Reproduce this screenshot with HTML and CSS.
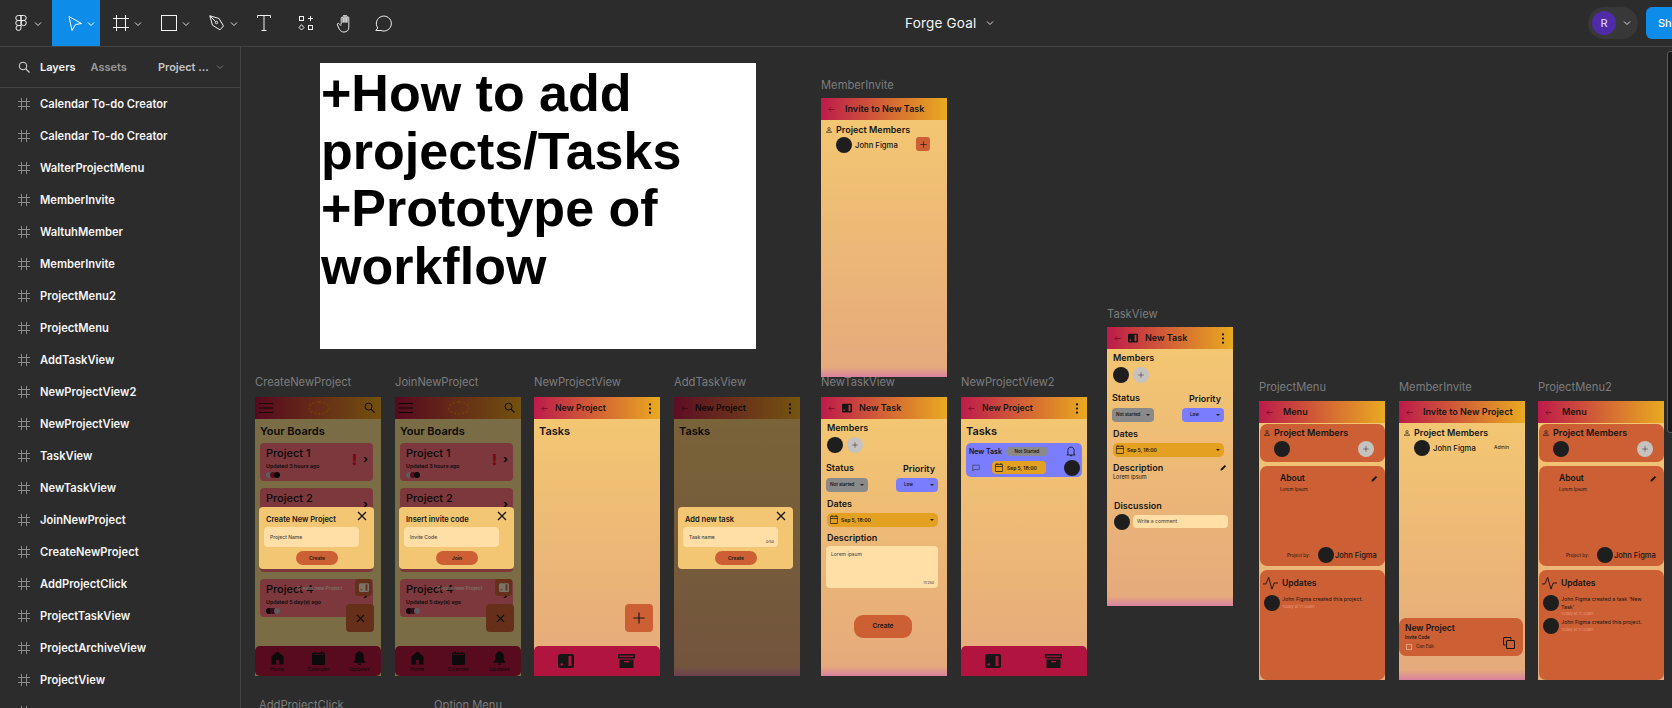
FILE: index.html
```html
<!DOCTYPE html>
<html lang="en">
<head>
<meta charset="utf-8">
<title>Forge Goal</title>
<link rel="stylesheet" href="styles.css">
</head>
<body>
<svg class="defs" width="0" height="0" aria-hidden="true">
  <symbol id="i-chev" viewBox="0 0 8 8"><path d="M1 2.5 4 5.5 7 2.5" fill="none" stroke="currentColor" stroke-width="1"/></symbol>
  <symbol id="i-hash" viewBox="0 0 12 12"><path d="M3.5 0v12M8.5 0v12M0 3.5h12M0 8.5h12" fill="none" stroke="currentColor" stroke-width="1"/></symbol>
  <symbol id="i-back" viewBox="0 0 8 8"><path d="M7.5 4H1M3.5 1.5 1 4l2.500 2.500" fill="none" stroke="currentColor" stroke-width="1"/></symbol>
  <symbol id="i-kebab" viewBox="0 0 4 12"><circle cx="2" cy="1.500" r="1.200"/><circle cx="2" cy="6" r="1.200"/><circle cx="2" cy="10.500" r="1.200"/></symbol>
  <symbol id="i-book" viewBox="0 0 16 14"><rect x="0" y="0" width="16" height="14" rx="2"/><rect x="10.500" y="2" width="3" height="10" fill="var(--cut,#b0143f)"/><rect x="2.500" y="9.500" width="2.500" height="2" fill="var(--cut,#b0143f)"/></symbol>
  <symbol id="i-archive" viewBox="0 0 17 14"><rect x="0" y="0" width="17" height="4.500" rx=".5"/><rect x="1.500" y="1.600" width="14" height="1.300" fill="var(--cut,#b0143f)"/><rect x="1.500" y="5.500" width="14" height="8.500"/><rect x="6" y="7" width="5" height="1.400" fill="var(--cut,#b0143f)"/></symbol>
  <symbol id="i-plus" viewBox="0 0 12 12"><path d="M6 .5v11M.5 6h11" fill="none" stroke="currentColor" stroke-width="1.100"/></symbol>
  <symbol id="i-close" viewBox="0 0 10 10"><path d="M1 1l8 8M9 1 1 9" fill="none" stroke="currentColor" stroke-width="1.300"/></symbol>
  <symbol id="i-search" viewBox="0 0 12 12"><circle cx="5" cy="5" r="3.800" fill="none" stroke="currentColor" stroke-width="1"/><path d="M7.800 7.800 11.500 11.500" stroke="currentColor" stroke-width="1.100"/></symbol>
  <symbol id="i-bell" viewBox="0 0 13 14"><path d="M6.500 0a1 1 0 0 1 1 1.100C9.600 1.600 10.700 3.300 10.700 5.300V9l1.800 2v.8H.5V11l1.800-2V5.300C2.300 3.300 3.400 1.600 5.500 1.100A1 1 0 0 1 6.500 0ZM4.800 12.500h3.400a1.700 1.500 0 0 1-3.400 0Z"/></symbol>
  <symbol id="i-bell-o" viewBox="0 0 13 14"><path d="M2.500 10.500V5.500C2.500 3 4 1.300 6.500 1.300S10.500 3 10.500 5.500v5l1.300 1H1.200ZM5 12.500h3" fill="none" stroke="currentColor" stroke-width="1.100"/></symbol>
  <symbol id="i-home" viewBox="0 0 14 14"><path d="M7 0 13.500 5.500V14H.5V5.500Z"/><rect x="5.500" y="9" width="3" height="5" fill="var(--cut,#5a0a22)"/></symbol>
  <symbol id="i-cal" viewBox="0 0 12 13"><path d="M2.500 0h1v1.500h5V0h1v1.500H11a1 1 0 0 1 1 1V12a1 1 0 0 1-1 1H1a1 1 0 0 1-1-1V2.500a1 1 0 0 1 1-1h1.500Z"/><rect x="1" y="3" width="10" height=".6" fill="var(--cut,#5a0a22)"/></symbol>
  <symbol id="i-cal-o" viewBox="0 0 12 13"><path d="M3 0v2.500M9 0v2.500M1 1.700h10a.5.5 0 0 1 .5.500V12a.5.5 0 0 1-.5.500H1a.5.5 0 0 1-.5-.5V2.200a.5.5 0 0 1 .5-.5ZM.5 5h11" fill="none" stroke="currentColor" stroke-width="1.100"/></symbol>
  <symbol id="i-person" viewBox="0 0 8 8"><circle cx="4" cy="2.300" r="1.600" fill="none" stroke="currentColor" stroke-width=".8"/><path d="M.8 7.500V6.500C.8 5.500 2 5 4 5s3.200.5 3.200 1.500v1Z" fill="none" stroke="currentColor" stroke-width=".8"/></symbol>
  <symbol id="i-pencil" viewBox="0 0 8 8"><path d="M.5 7.500 1 5.500 5.500 1 7 2.500 2.500 7Z"/></symbol>
  <symbol id="i-pulse" viewBox="0 0 16 14"><path d="M0 8h3L6 1l3.500 12.500L12 7h4" fill="none" stroke="currentColor" stroke-width="1"/></symbol>
  <symbol id="i-copy" viewBox="0 0 12 12"><rect x="3.500" y="3.500" width="8" height="8" rx="1" fill="none" stroke="currentColor" stroke-width="1.100"/><path d="M2.500 8H1.500a1 1 0 0 1-1-1V1.500a1 1 0 0 1 1-1H7a1 1 0 0 1 1 1v1" fill="none" stroke="currentColor" stroke-width="1.100"/></symbol>
  <symbol id="i-comment" viewBox="0 0 9 8"><path d="M.8 .8h7.400v5H2.300L.8 7.200Z" fill="none" stroke="currentColor" stroke-width=".7"/></symbol>
  <symbol id="i-menu" viewBox="0 0 14 10"><path d="M0 .5h14M0 5h14M0 9.500h14" stroke="currentColor" stroke-width="1"/></symbol>
</svg>

<header class="topbar">
  <div class="tool tool-figma">
    <svg class="ico-figma" viewBox="0 0 12 16"><path d="M6 .5H3.250a2.500 2.500 0 0 0 0 5H6ZM6 .5h2.750a2.500 2.500 0 0 1 0 5H6ZM6 5.500H3.250a2.500 2.500 0 0 0 0 5H6ZM6 8a2.500 2.500 0 1 0 5.250 0A2.500 2.500 0 1 0 6 8ZM6 10.500H3.250a2.500 2.500 0 1 0 2.750 2.500Z" fill="none" stroke="currentColor"/></svg>
    <svg class="chev"><use href="#i-chev"/></svg>
  </div>
  <div class="tool tool-active">
    <svg class="ico" viewBox="0 0 16 16"><path d="M2 1.500 14.500 8.500 8.500 9.500 5 15.500Z" fill="none" stroke="currentColor"/></svg>
    <svg class="chev"><use href="#i-chev"/></svg>
  </div>
  <div class="tool">
    <svg class="ico" viewBox="0 0 16 16"><path d="M3.500 0v16M12.500 0v16M0 3.500h16M0 12.500h16" fill="none" stroke="currentColor"/></svg>
    <svg class="chev"><use href="#i-chev"/></svg>
  </div>
  <div class="tool">
    <svg class="ico" viewBox="0 0 16 16"><rect x=".5" y=".5" width="15" height="15" fill="none" stroke="currentColor"/></svg>
    <svg class="chev"><use href="#i-chev"/></svg>
  </div>
  <div class="tool">
    <svg class="ico" viewBox="0 0 16 16"><path d="M.8.800 10 3.500l4.500 7.500-3.500 3.800-7.500-4.500ZM.8.800 6.500 6.500" fill="none" stroke="currentColor"/><circle cx="7.500" cy="7.500" r="1.200" fill="none" stroke="currentColor"/></svg>
    <svg class="chev"><use href="#i-chev"/></svg>
  </div>
  <div class="tool tool-plain tool-t">
    <svg class="ico" viewBox="0 0 16 16"><path d="M1.500 3V.5h13V3M8 .5v15M5.500 15.500h5" fill="none" stroke="currentColor"/></svg>
  </div>
  <div class="tool tool-plain">
    <svg class="ico" viewBox="0 0 16 16"><rect x="1.500" y="1.500" width="4" height="4" fill="none" stroke="currentColor"/><rect x="10.500" y="10.500" width="4" height="4" fill="none" stroke="currentColor"/><path d="M12.500 1v5M10 3.500h5M3.500 9.700 6 12.500 3.500 15 1 12.500Z" fill="none" stroke="currentColor"/></svg>
  </div>
  <div class="tool tool-plain tool-hand">
    <svg class="ico ico-big" viewBox="0 0 18 20"><path d="M5 11V4.500a1 1 0 0 1 2 0V9 2.500a1 1 0 0 1 2 0V9 2.500a1 1 0 0 1 2 0V9 4a1 1 0 0 1 2 0v10c0 3-2 5-5 5-2.500 0-3.500-1-5-3L1 11.500c-.6-1.200.8-2.200 1.800-1.300L5 12.500" fill="none" stroke="currentColor"/></svg>
  </div>
  <div class="tool tool-plain">
    <svg class="ico ico-big" viewBox="0 0 18 18"><path d="M2.800 13.500A7.500 7.500 0 1 1 6 16H.8Z" fill="none" stroke="currentColor"/></svg>
  </div>
  <div class="title">Forge Goal<svg class="chev"><use href="#i-chev"/></svg></div>
  <div class="right">
    <div class="pill"><span class="avatar">R</span><svg class="chev"><use href="#i-chev"/></svg></div>
    <div class="share">Share</div>
  </div>
</header>

<div class="main">
  <aside class="side">
    <div class="tabs">
      <svg class="tabs-search"><use href="#i-search"/></svg>
      <span class="tab tab-on">Layers</span>
      <span class="tab">Assets</span>
      <span class="tab-page">Project ...</span>
      <svg class="chev chev-dim"><use href="#i-chev"/></svg>
    </div>
    <ul class="layers">
      <li><svg><use href="#i-hash"/></svg>Calendar To-do Creator</li>
      <li><svg><use href="#i-hash"/></svg>Calendar To-do Creator</li>
      <li><svg><use href="#i-hash"/></svg>WalterProjectMenu</li>
      <li><svg><use href="#i-hash"/></svg>MemberInvite</li>
      <li><svg><use href="#i-hash"/></svg>WaltuhMember</li>
      <li><svg><use href="#i-hash"/></svg>MemberInvite</li>
      <li><svg><use href="#i-hash"/></svg>ProjectMenu2</li>
      <li><svg><use href="#i-hash"/></svg>ProjectMenu</li>
      <li><svg><use href="#i-hash"/></svg>AddTaskView</li>
      <li><svg><use href="#i-hash"/></svg>NewProjectView2</li>
      <li><svg><use href="#i-hash"/></svg>NewProjectView</li>
      <li><svg><use href="#i-hash"/></svg>TaskView</li>
      <li><svg><use href="#i-hash"/></svg>NewTaskView</li>
      <li><svg><use href="#i-hash"/></svg>JoinNewProject</li>
      <li><svg><use href="#i-hash"/></svg>CreateNewProject</li>
      <li><svg><use href="#i-hash"/></svg>AddProjectClick</li>
      <li><svg><use href="#i-hash"/></svg>ProjectTaskView</li>
      <li><svg><use href="#i-hash"/></svg>ProjectArchiveView</li>
      <li><svg><use href="#i-hash"/></svg>ProjectView</li>
      <li><svg><use href="#i-hash"/></svg></li>
    </ul>
  </aside>

  <main class="canvas">
    <div class="note">+How to add projects/Tasks +Prototype of workflow</div>

    <!-- MemberInvite (top) -->
    <section class="node n-invite-top">
      <div class="label">MemberInvite</div>
      <div class="frame strip">
        <div class="hd"><svg class="back"><use href="#i-back"/></svg><span class="hd-t hd-t-far">Invite to New Task</span></div>
        <div class="inv-body">
          <div class="pm-title"><svg><use href="#i-person"/></svg>Project Members</div>
          <div class="inv-row">
            <span class="av"></span><span class="name">John Figma</span>
            <span class="add-sq"><svg><use href="#i-plus"/></svg></span>
          </div>
        </div>
      </div>
    </section>

    <!-- CreateNewProject -->
    <section class="node n-create">
      <div class="label">CreateNewProject</div>
      <div class="frame frame-home">
        <div class="hd hd-home"><svg class="menu"><use href="#i-menu"/></svg><span class="wreath"></span><svg class="search"><use href="#i-search"/></svg></div>
        <div class="boards">
          <div class="h2">Your Boards</div>
          <div class="bcard"><div class="bc-main"><div class="bc-t">Project 1</div><div class="bc-s">Updated 3 hours ago</div><div class="dots"><i class="d-g"></i><i class="d-r"></i><i class="d-k"></i></div></div><b class="bang">!</b><b class="go">›</b></div>
          <div class="bcard"><div class="bc-main"><div class="bc-t">Project 2</div></div><b class="go">›</b></div>
          <div class="bcard"></div>
          <div class="bcard"><div class="bc-main"><div class="bc-t">Project 4</div><div class="bc-s">Updated 5 day(s) ago</div><div class="dots"><i class="d-k"></i><i class="d-m"></i><i class="d-g"></i></div></div><b class="go">›</b></div>
        </div>
        <nav class="nav nav-home">
          <div class="nv"><svg class="nv-i"><use href="#i-home"/></svg>Home</div>
          <div class="nv"><svg class="nv-i"><use href="#i-cal"/></svg>Calendar</div>
          <div class="nv"><svg class="nv-i"><use href="#i-bell"/></svg>Updates</div>
        </nav>
        <div class="fab-row"><span>Create new Project</span><span class="mini"><svg><use href="#i-book"/></svg></span></div>
        <div class="fab"><svg class="fab-x"><use href="#i-close"/></svg></div>
        <div class="dim"></div>
        <div class="modal">
          <div class="m-head"><span>Create New Project</span><svg><use href="#i-close"/></svg></div>
          <div class="m-input">Project Name</div>
          <div class="m-btn">Create</div>
        </div>
      </div>
    </section>

    <!-- JoinNewProject -->
    <section class="node n-join">
      <div class="label">JoinNewProject</div>
      <div class="frame frame-home">
        <div class="hd hd-home"><svg class="menu"><use href="#i-menu"/></svg><span class="wreath"></span><svg class="search"><use href="#i-search"/></svg></div>
        <div class="boards">
          <div class="h2">Your Boards</div>
          <div class="bcard"><div class="bc-main"><div class="bc-t">Project 1</div><div class="bc-s">Updated 3 hours ago</div><div class="dots"><i class="d-g"></i><i class="d-r"></i><i class="d-k"></i></div></div><b class="bang">!</b><b class="go">›</b></div>
          <div class="bcard"><div class="bc-main"><div class="bc-t">Project 2</div></div><b class="go">›</b></div>
          <div class="bcard"></div>
          <div class="bcard"><div class="bc-main"><div class="bc-t">Project 4</div><div class="bc-s">Updated 5 day(s) ago</div><div class="dots"><i class="d-k"></i><i class="d-m"></i><i class="d-g"></i></div></div><b class="go">›</b></div>
        </div>
        <nav class="nav nav-home">
          <div class="nv"><svg class="nv-i"><use href="#i-home"/></svg>Home</div>
          <div class="nv"><svg class="nv-i"><use href="#i-cal"/></svg>Calendar</div>
          <div class="nv"><svg class="nv-i"><use href="#i-bell"/></svg>Updates</div>
        </nav>
        <div class="fab-row"><span>Create new Project</span><span class="mini"><svg><use href="#i-book"/></svg></span></div>
        <div class="fab"><svg class="fab-x"><use href="#i-close"/></svg></div>
        <div class="dim"></div>
        <div class="modal">
          <div class="m-head"><span>Insert invite code</span><svg><use href="#i-close"/></svg></div>
          <div class="m-input">Invite Code</div>
          <div class="m-btn">Join</div>
        </div>
      </div>
    </section>

    <!-- NewProjectView -->
    <section class="node n-newproj">
      <div class="label">NewProjectView</div>
      <div class="frame">
        <div class="hd"><svg class="back"><use href="#i-back"/></svg><span class="hd-t hd-np">New Project</span><svg class="kebab"><use href="#i-kebab"/></svg></div>
        <div class="tasks"><div class="h2">Tasks</div></div>
        <nav class="nav nav-two"><svg class="nv-a"><use href="#i-book"/></svg><svg class="nv-b"><use href="#i-archive"/></svg></nav>
        <div class="fab fab-on"><svg class="fab-p"><use href="#i-plus"/></svg></div>
      </div>
    </section>

    <!-- AddTaskView -->
    <section class="node n-addtask">
      <div class="label">AddTaskView</div>
      <div class="frame strip">
        <div class="hd"><svg class="back"><use href="#i-back"/></svg><span class="hd-t hd-np">New Project</span><svg class="kebab"><use href="#i-kebab"/></svg></div>
        <div class="tasks"><div class="h2">Tasks</div></div>
        <div class="dim"></div>
        <div class="modal">
          <div class="m-head"><span>Add new task</span><svg><use href="#i-close"/></svg></div>
          <div class="m-input">Task name<small>0/50</small></div>
          <div class="m-btn">Create</div>
        </div>
      </div>
    </section>

    <!-- NewTaskView -->
    <section class="node n-newtask">
      <div class="label">NewTaskView</div>
      <div class="frame strip">
        <div class="hd"><svg class="back"><use href="#i-back"/></svg><svg class="hd-book"><use href="#i-book"/></svg><span class="hd-t">New Task</span></div>
        <div class="form">
          <div class="lbl">Members</div>
          <div class="mem"><span class="av"></span><span class="av-add"><svg><use href="#i-plus"/></svg></span></div>
          <div class="two">
            <div><div class="lbl">Status</div><div class="dd dd-grey">Not started<i class="caret"></i></div></div>
            <div class="pri"><div class="lbl lbl-pri">Priority</div><div class="dd dd-blue">Low<i class="caret"></i></div></div>
          </div>
          <div class="lbl lbl-dates">Dates</div>
          <div class="datebar"><svg><use href="#i-cal-o"/></svg><span>Sep 5, 18:00</span><i class="caret"></i></div>
          <div class="lbl lbl-desc">Description</div>
          <div class="area">Lorem ipsum<small>11/250</small></div>
          <div class="create">Create</div>
        </div>
      </div>
    </section>

    <!-- NewProjectView2 -->
    <section class="node n-newproj2">
      <div class="label">NewProjectView2</div>
      <div class="frame">
        <div class="hd"><svg class="back"><use href="#i-back"/></svg><span class="hd-t hd-np">New Project</span><svg class="kebab"><use href="#i-kebab"/></svg></div>
        <div class="tasks">
          <div class="h2">Tasks</div>
          <div class="tcard">
            <div class="tc-row"><span class="tc-name">New Task</span><span class="tc-badge">Not Started</span><svg class="tc-bell"><use href="#i-bell-o"/></svg></div>
            <div class="tc-row tc-row2"><svg class="tc-cm"><use href="#i-comment"/></svg><span class="tc-date"><svg><use href="#i-cal-o"/></svg>Sep 5, 18:00</span><span class="av"></span></div>
          </div>
        </div>
        <nav class="nav nav-two"><svg class="nv-a"><use href="#i-book"/></svg><svg class="nv-b"><use href="#i-archive"/></svg></nav>
      </div>
    </section>

    <!-- TaskView -->
    <section class="node n-taskview">
      <div class="label">TaskView</div>
      <div class="frame strip">
        <div class="hd"><svg class="back"><use href="#i-back"/></svg><svg class="hd-book"><use href="#i-book"/></svg><span class="hd-t">New Task</span><svg class="kebab"><use href="#i-kebab"/></svg></div>
        <div class="form">
          <div class="lbl">Members</div>
          <div class="mem"><span class="av"></span><span class="av-add"><svg><use href="#i-plus"/></svg></span></div>
          <div class="two">
            <div><div class="lbl">Status</div><div class="dd dd-grey">Not started<i class="caret"></i></div></div>
            <div class="pri"><div class="lbl lbl-pri">Priority</div><div class="dd dd-blue">Low<i class="caret"></i></div></div>
          </div>
          <div class="lbl lbl-dates">Dates</div>
          <div class="datebar"><svg><use href="#i-cal-o"/></svg><span>Sep 5, 18:00</span><i class="caret"></i></div>
          <div class="lbl lbl-desc lbl-row">Description<svg><use href="#i-pencil"/></svg></div>
          <div class="lorem">Lorem ipsum</div>
          <div class="lbl lbl-disc">Discussion</div>
          <div class="disc"><span class="av"></span><span class="comment">Write a comment</span></div>
        </div>
      </div>
    </section>

    <!-- ProjectMenu -->
    <section class="node n-menu">
      <div class="label">ProjectMenu</div>
      <div class="frame">
        <div class="hd"><svg class="back"><use href="#i-back"/></svg><span class="hd-t hd-t-far">Menu</span></div>
        <div class="cards">
          <div class="mc mc-mem">
            <div class="pm-title"><svg><use href="#i-person"/></svg>Project Members</div>
            <div class="mc-row"><span class="av"></span><span class="av-add"><svg><use href="#i-plus"/></svg></span></div>
          </div>
          <div class="mc mc-about">
            <div class="ab-t">About<svg><use href="#i-pencil"/></svg></div>
            <div class="ab-l">Lorem Ipsum</div>
            <div class="ab-by"><small>Project by:</small><span class="av"></span><b>John Figma</b></div>
          </div>
          <div class="mc mc-upd">
            <div class="up-t"><svg><use href="#i-pulse"/></svg>Updates</div>
            <div class="up-i"><span class="av"></span><div><p>John Figma created this project.</p><em>Today at 11:30am</em></div></div>
          </div>
        </div>
      </div>
    </section>

    <!-- MemberInvite -->
    <section class="node n-invite">
      <div class="label">MemberInvite</div>
      <div class="frame strip">
        <div class="hd"><svg class="back"><use href="#i-back"/></svg><span class="hd-t hd-t-far">Invite to New Project</span></div>
        <div class="inv-body">
          <div class="pm-title"><svg><use href="#i-person"/></svg>Project Members</div>
          <div class="inv-row"><span class="av"></span><span class="name">John Figma</span><span class="admin">Admin</span></div>
        </div>
        <div class="inv-card">
          <div class="ic-t">New Project</div>
          <div class="ic-c">Invite Code</div>
          <div class="ic-e"><i></i>Can Edit</div>
          <svg class="ic-copy"><use href="#i-copy"/></svg>
        </div>
      </div>
    </section>

    <!-- ProjectMenu2 -->
    <section class="node n-menu2">
      <div class="label">ProjectMenu2</div>
      <div class="frame">
        <div class="hd"><svg class="back"><use href="#i-back"/></svg><span class="hd-t hd-t-far">Menu</span></div>
        <div class="cards">
          <div class="mc mc-mem">
            <div class="pm-title"><svg><use href="#i-person"/></svg>Project Members</div>
            <div class="mc-row"><span class="av"></span><span class="av-add"><svg><use href="#i-plus"/></svg></span></div>
          </div>
          <div class="mc mc-about">
            <div class="ab-t">About<svg><use href="#i-pencil"/></svg></div>
            <div class="ab-l">Lorem Ipsum</div>
            <div class="ab-by"><small>Project by:</small><span class="av"></span><b>John Figma</b></div>
          </div>
          <div class="mc mc-upd">
            <div class="up-t"><svg><use href="#i-pulse"/></svg>Updates</div>
            <div class="up-i"><span class="av"></span><div><p>John Figma created a task 'New Task'</p><em>Today at 11:30am</em></div></div>
            <div class="up-i up-i2"><span class="av"></span><div><p>John Figma created this project.</p><em>Today at 11:30am</em></div></div>
          </div>
        </div>
      </div>
    </section>

    <div class="label-free l-click">AddProjectClick</div>
    <div class="label-free l-option">Option Menu</div>
    <div class="edge"></div>
  </main>
</div>
</body>
</html>
```
FILE: styles.css
```css
* { box-sizing: border-box; }
html, body { margin: 0; height: 100%; overflow: hidden; }
body { background: #2c2c2c; color: #fff; font-family: "Inter", "Liberation Sans", sans-serif; display: flex; flex-direction: column; }
.defs { position: absolute; }
svg { display: block; fill: currentColor; }
p { margin: 0; }

/* top bar */
.topbar { height: 47px; flex: none; display: flex; align-items: stretch; border-bottom: 1px solid #444; background: #2c2c2c; }
.tool { width: 48px; display: flex; align-items: center; padding-left: 13px; color: #f2f2f2; position: relative; }
.tool-figma { width: 52px; padding-left: 15px; }
.tool-active { background: #0d8ce9; padding-left: 15px; color: #fff; }
.tool-plain { width: 40px; padding-left: 0; justify-content: center; }
.tool-t { margin-right: 2px; }
.tool-hand { width: 38px; }
.ico { width: 16px; height: 16px; }
.ico-big { width: 18px; height: 19px; }
.ico-figma { width: 12px; height: 16px; }
.chev { width: 8px; height: 8px; position: absolute; left: 34px; top: 20px; color: #ddd; }
.tool-active .chev { left: 35px; color: #fff; }
.title { margin-left: 501px; font-size: 13.500px; display: flex; align-items: center; color: #f5f5f5; letter-spacing: .2px; position: relative; padding-right: 18px; }
.title .chev { left: auto; right: 0; top: 19px; }
.right { margin-left: auto; display: flex; align-items: center; gap: 8px; width: 84px; overflow: hidden; flex: none; }
.pill { flex: none; width: 50px; height: 32px; border-radius: 16px; background: #383838; display: flex; align-items: center; padding-left: 4px; position: relative; }
.avatar { width: 24px; height: 24px; border-radius: 50%; background: #4f2ba8; color: #d9c8f5; font-size: 11px; font-weight: 500; display: flex; align-items: center; justify-content: center; }
.pill .chev { left: 35px; top: 12px; }
.share { flex: none; width: 70px; height: 32px; background: #0d8ce9; border-radius: 6px; font-size: 11px; font-weight: 500; line-height: 32px; padding-left: 12px; }

.main { flex: 1; display: flex; min-height: 0; }

/* sidebar */
.side { width: 241px; flex: none; border-right: 1px solid #444; overflow: hidden; background: #2c2c2c; }
.tabs { height: 41px; border-bottom: 1px solid #444; display: flex; align-items: center; padding-left: 18px; position: relative; font-size: 11px; font-weight: 600; }
.tabs-search { width: 12px; height: 12px; margin-right: 10px; color: #ddd; }
.tab { color: #9a9a9a; margin-right: 15px; }
.tab-on { color: #f2f2f2; }
.tab-page { color: #c4c4c4; margin-left: 16px; }
.chev-dim { left: 216px; top: 16px; color: #777; }
.layers { list-style: none; margin: 0; padding: 0; }
.layers li { height: 32px; display: flex; align-items: center; font-size: 11.200px; font-weight: 600; color: #f4f4f4; padding-left: 18px; }
.layers svg { width: 12px; height: 12px; margin-right: 10px; color: #8a8a8a; flex: none; }

/* canvas */
.canvas { flex: 1; position: relative; overflow: hidden; background: #2c2c2c; }
.note { position: absolute; left: 79px; top: 16px; width: 436px; height: 286px; background: #fff; color: #000; font: 700 52px/57.600px "Liberation Sans", Arial, sans-serif; padding: 2px 1px; }
.edge { position: absolute; left: 1426px; top: 4px; width: 12px; height: 382px; background: #1a1a1a; border: 1px solid #5a5a5a; border-radius: 3px; }
.node { position: absolute; width: 126px; }
.n-invite-top { left: 580px; top: 29px; }
.n-create { left: 14px; top: 328px; }
.n-join { left: 154px; top: 328px; }
.n-newproj { left: 293px; top: 328px; }
.n-addtask { left: 433px; top: 328px; }
.n-newtask { left: 580px; top: 328px; }
.n-newproj2 { left: 720px; top: 328px; }
.n-taskview { left: 866px; top: 258px; }
.n-menu { left: 1018px; top: 332px; }
.n-invite { left: 1158px; top: 332px; }
.n-menu2 { left: 1297px; top: 332px; }
.label { height: 14px; line-height: 14px; margin-bottom: 8px; font-size: 11.200px; color: #7c7c7c; white-space: nowrap; }
.n-invite-top .label, .n-taskview .label { transform: translateY(1.500px); }
.n-menu .label, .n-invite .label, .n-menu2 .label { transform: translateY(1px); }
.label-free { position: absolute; top: 651px; height: 14px; line-height: 14px; font-size: 11.200px; color: #7c7c7c; white-space: nowrap; }
.l-click { left: 18px; }
.l-option { left: 193px; }

/* phone frame */
.frame { position: relative; width: 126px; height: 279px; overflow: hidden; display: flex; flex-direction: column; background: linear-gradient(180deg, #f4c971 0%, #e5a97c 100%); color: #161616; font-weight: 600; }
.strip::after { content: ""; position: absolute; left: 0; right: 0; bottom: 0; height: 10px; background: linear-gradient(180deg, rgba(218,130,160,0), #d9839f); }
.frame-home { background: #f4d888; }
.hd { height: 22px; flex: none; display: flex; align-items: center; position: relative; background: linear-gradient(90deg, #bd1b4a 0%, #e9aa20 100%); font-size: 9px; }
.back { width: 7px; height: 7px; margin-left: 7px; color: #7a0e2c; flex: none; }
.hd-t { margin-left: 7px; margin-top: -1px; white-space: nowrap; }
.hd-np { font-size: 8.700px; }
.hd-t-far { margin-left: 10px; }
.hd-book { width: 10px; height: 10px; margin-left: 7px; --cut: #c23a3f; }
.kebab { position: absolute; right: 8px; top: 6px; width: 4px; height: 11px; }
.hd-home { background: linear-gradient(90deg, #b0123f 0%, #e5a21e 100%); }
.menu { width: 14px; height: 10px; margin-left: 4px; color: #111; }
.wreath { position: absolute; left: 53px; top: 4px; width: 22px; height: 14px; border-radius: 50%; border: 2px dotted #e07a10; }
.search { position: absolute; right: 6px; top: 5px; width: 11px; height: 11px; color: #111; }

/* boards */
.h2 { font-size: 11px; line-height: 12px; margin-top: 5.500px; }
.boards { padding: 0 8px 0 5px; display: flex; flex-direction: column; gap: 7.500px; }
.boards .h2 { margin-bottom: -1.500px; }
.bcard { height: 38px; flex: none; background: #f87078; border-radius: 4px; padding: 4px 7px 0 6px; display: flex; align-items: flex-start; position: relative; }
.bc-main { flex: 1; }
.bc-t { font-size: 11px; line-height: 13px; font-weight: 500; }
.bc-s { font-size: 5.300px; line-height: 6px; margin-top: 3px; }
.dots { display: flex; margin-top: 3px; }
.dots i { width: 6px; height: 6px; border-radius: 50%; margin-right: -2px; }
.d-g { background: #b8b8b8; }
.d-r { background: #c0142f; }
.d-k { background: #111; }
.d-m { background: #7a0f38; }
.bang { position: absolute; right: 16px; top: 8px; color: #f00f2f; font-size: 14px; line-height: 18px; }
.go { position: absolute; right: 5px; top: 9px; font-size: 11px; line-height: 14px; font-weight: 800; }

/* navs */
.nav { margin-top: auto; height: 30px; flex: none; background: #b0143f; border-radius: 5px 5px 0 0; position: relative; }
.nav-home { display: grid; grid-template-columns: 44px 39px 43px; font-size: 5px; font-weight: 400; text-align: center; --cut: #b0143f; border-radius: 5px; }
.nv { display: flex; flex-direction: column; align-items: center; padding-top: 5px; line-height: 7px; }
.nv-i { width: 13px; height: 14px; margin-bottom: 1px; }
.nav-two { display: flex; align-items: center; justify-content: space-between; padding: 0 25px 0 24px; --cut: #b0143f; }
.nv-a { width: 16px; height: 14px; }
.nv-b { width: 17px; height: 14px; }
.tasks { padding: 0 5px; flex: none; }

/* overlay bits */
.dim { position: absolute; inset: 0; background: rgba(0, 0, 0, .5); z-index: 1; }
.fab { position: absolute; left: 91px; top: 207px; width: 28px; height: 28px; border-radius: 4px; background: #cc5f33; display: flex; align-items: center; justify-content: center; }
.fab-x { width: 9px; height: 9px; }
.fab-p { width: 12px; height: 12px; }
.fab-row { position: absolute; left: 42px; top: 182px; width: 73px; height: 17px; display: flex; align-items: center; justify-content: space-between; font-size: 5px; font-weight: 500; color: #f3e6d4; }
.mini { width: 17px; height: 17px; border-radius: 3px; background: #cc5f33; display: flex; align-items: center; justify-content: center; margin-right: -2px; }
.mini svg { width: 10px; height: 9px; --cut: #cc5f33; }
.modal { position: absolute; left: 4px; top: 110px; width: 115px; height: 62px; background: #f2c672; border-radius: 4px; padding: 0 5px; z-index: 2; }
.m-head { height: 20px; padding: 7px 0 0 2px; font-size: 7.500px; line-height: 12px; display: flex; justify-content: space-between; white-space: nowrap; position: relative; }
.m-head svg { position: absolute; right: 2px; top: 4px; width: 10px; height: 10px; }
.m-input { width: 95px; height: 20px; border-radius: 4px; background: #ffdfa6; font-size: 5px; font-weight: 500; line-height: 20px; padding-left: 6px; position: relative; color: #444; }
.m-input small, .area small { position: absolute; right: 4px; bottom: 2px; font-size: 3.500px; line-height: 5px; }
.m-btn { width: 42px; height: 14px; margin: 3.500px 0 0 32px; border-radius: 7px; background: #cc5f33; font-size: 5px; line-height: 14px; text-align: center; }

/* forms */
.form { padding: 3px 9px 0 5px; display: flex; flex-direction: column; }
.lbl { font-size: 9px; line-height: 11px; margin-left: 1px; }
.mem { display: flex; gap: 4px; margin: 4px 0 0 1px; }
.av { width: 16px; height: 16px; flex: none; border-radius: 50%; background: #1e1e1e; }
.av-add { width: 16px; height: 16px; flex: none; border-radius: 50%; background: #c6c2c0; display: flex; align-items: center; justify-content: center; color: #333; }
.av-add svg { width: 6px; height: 6px; }
.two { display: flex; justify-content: space-between; margin-top: 9px; }
.two > div > .lbl { margin-left: 0; }
.lbl-pri { padding: 1px 0 0 7px; height: 11px; }
.dd { width: 42px; height: 13.500px; border-radius: 4px; margin-top: 5px; font-size: 4.500px; line-height: 13.500px; padding-left: 4px; position: relative; }
.dd-grey { background: #8a8a8a; }
.dd-blue { background: #7a7dff; padding-left: 8px; }
.caret { position: absolute; right: 4px; top: 5.500px; width: 0; height: 0; border: 2px solid transparent; border-top-color: #222; border-bottom-width: 0; }
.lbl-dates { margin-top: 6.500px; }
.datebar { height: 13.500px; margin: 4px 0 0 1px; border-radius: 5px; background: #e4a020; display: flex; align-items: center; padding-left: 3px; font-size: 5px; position: relative; }
.datebar svg { width: 8px; height: 9px; margin-right: 3px; }
.lbl-desc { margin-top: 5.500px; }
.lbl-row { display: flex; justify-content: space-between; padding-right: 0; }
.lbl-row svg { width: 7px; height: 7px; margin-top: 2px; margin-right: -3px; }
.area { height: 42px; margin-top: 3px; border-radius: 4px; background: #ffdfa6; font-size: 5px; font-weight: 500; padding: 5px; line-height: 6px; color: #555; position: relative; }
.create { width: 58px; height: 23px; margin: 27px 0 0 28px; border-radius: 9px; background: #cc5f33; font-size: 6.500px; line-height: 23px; text-align: center; }
.lorem { font-size: 5.500px; font-weight: 400; line-height: 7px; margin: 1px 0 0 1px; }
.lbl-disc { margin: 19px 0 0 2px; }
.disc { display: flex; align-items: center; gap: 3px; margin: 2.500px -4px 0 2px; }
.comment { flex: 1; height: 13px; background: #ffdfa6; border-radius: 4px; font-size: 5px; font-weight: 400; line-height: 13px; padding-left: 4px; color: #444; }

/* task card */
.tcard { height: 34.500px; margin-top: 6px; border-radius: 5px; background: #7a7dff; padding: 3px 0 0 3px; }
.tc-row { display: flex; align-items: center; height: 11px; position: relative; }
.tc-name { font-size: 7px; }
.tc-badge { margin-left: 4px; width: 42px; height: 9px; border-radius: 5px; background: #8a8a8a; font-size: 4.500px; line-height: 9px; text-align: center; }
.tc-bell { position: absolute; left: 97px; top: 0; width: 10px; height: 11px; }
.tc-row2 { margin-top: 3px; height: 16px; }
.tc-cm { width: 8px; height: 8px; margin-left: 3px; color: #333; }
.tc-date { margin-left: 12px; width: 54px; height: 13px; background: #e4a020; border-radius: 4px; display: flex; align-items: center; font-size: 5px; padding-left: 3px; }
.tc-date svg { width: 8px; height: 9px; margin-right: 4px; }
.tc-row2 .av { margin-left: 18px; }

/* menu cards */
.cards { padding: 1px 0 0 1px; display: flex; flex-direction: column; gap: 4px; }
.mc { background: #cc5f33; border-radius: 7px; position: relative; flex: none; }
.mc-mem { height: 38px; padding: 3px 0 0 4px; }
.pm-title { display: flex; align-items: center; font-size: 9px; line-height: 11px; white-space: nowrap; }
.pm-title svg { width: 6px; height: 6px; margin-right: 4px; flex: none; }
.mc-row { display: flex; justify-content: space-between; padding: 3px 11px 0 10px; }
.mc-about { height: 100px; padding: 7px 0 0 20px; }
.ab-t { font-size: 8.500px; line-height: 11px; display: flex; justify-content: space-between; padding-right: 7px; }
.ab-t svg { width: 7px; height: 7px; margin-top: 2px; }
.ab-l { font-size: 4.500px; font-weight: 400; margin-top: 3px; line-height: 6px; }
.ab-by { position: absolute; left: 27px; bottom: 3px; display: flex; align-items: center; white-space: nowrap; }
.ab-by small { font-size: 4.500px; font-weight: 400; width: 31px; }
.ab-by b { font-size: 7.500px; font-weight: 500; margin-left: 1px; }
.mc-upd { height: 110px; padding: 6px 0 0 3px; }
.up-t { display: flex; align-items: center; font-size: 8.500px; line-height: 14px; }
.up-t svg { width: 15px; height: 14px; margin-right: 4px; }
.up-i { display: flex; gap: 2px; margin: 5px 0 0 1px; font-size: 5.300px; font-weight: 400; line-height: 7.700px; }
.up-i p { width: 88px; margin-top: 1px; }
.up-i em { display: block; font-style: normal; font-size: 4px; line-height: 6px; color: #e8967a; }
.up-i2 { margin-top: 1px; }

/* invite */
.inv-body { padding: 4px 0 0 5px; }
.inv-row { display: flex; align-items: center; padding: 2px 0 0 10px; position: relative; }
.name { font-size: 7.700px; margin-left: 3px; font-weight: 500; }
.add-sq { position: absolute; left: 90px; top: 2px; width: 14px; height: 14px; border-radius: 3px; background: #cc5f33; display: flex; align-items: center; justify-content: center; }
.add-sq svg { width: 7px; height: 7px; }
.admin { position: absolute; left: 90px; top: 6px; font-size: 5px; font-weight: 400; }
.inv-card { position: absolute; left: 0; top: 217px; width: 124px; height: 38px; background: #cc5f33; border-radius: 7px; padding: 5px 0 0 6px; }
.ic-t { font-size: 8.500px; line-height: 11px; }
.ic-c { font-size: 4.500px; line-height: 6px; margin-top: 1px; }
.ic-e { display: flex; align-items: center; font-size: 4.500px; font-weight: 400; margin-top: 3px; line-height: 6px; }
.ic-e i { width: 6px; height: 6px; border: .7px solid #e0a080; margin: 0 4px 0 1px; }
.ic-copy { position: absolute; left: 104px; top: 19px; width: 12px; height: 12px; }
```
